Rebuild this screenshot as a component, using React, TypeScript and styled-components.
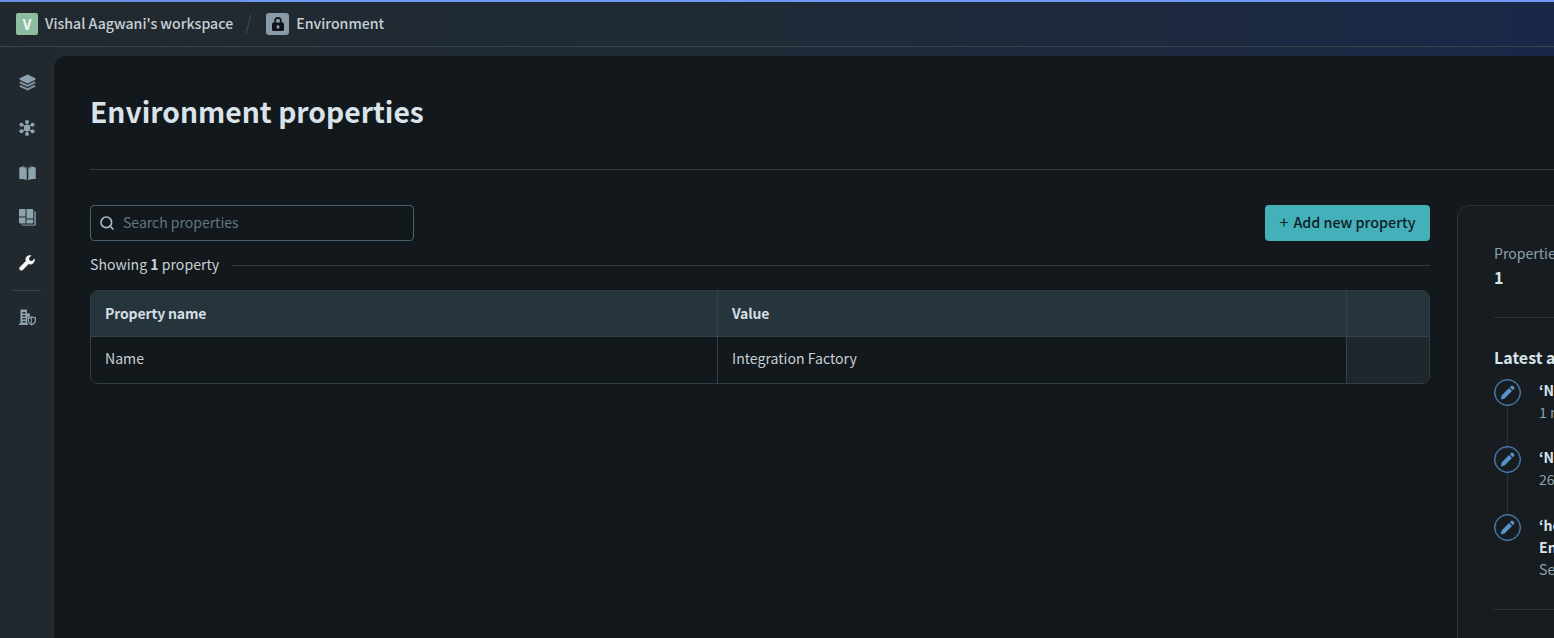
import React from 'react';
import styled, { createGlobalStyle } from 'styled-components';
import { Search } from 'lucide-react';

const FONT = '"Noto Sans CJK JP", "Noto Sans", sans-serif';

const GlobalStyle = createGlobalStyle`
    html, body {
        margin: 0;
        padding: 0;
        height: 100%;
        overflow: hidden;
        background: #1e2a3c;
    }
    #root { height: 100%; }
    * { box-sizing: border-box; }
`;

const activities = [
    { title: '‘Name’ property updated', lines: [], time: '1 minute ago', gap: 67 },
    { title: '‘Name’ property updated', lines: [], time: '26 minutes ago', gap: 68 },
    { title: '‘hello’ property added', lines: ['Environment'], time: 'Seen 1 hour ago', gap: 0 },
];

const LayersIcon = () => (
    <svg width="17" height="17" viewBox="0 0 17 17" fill="currentColor">
        <path d="M8.5 0.4 16.4 4.3 16.4 5.7 8.5 9.6 0.6 5.700 0.6 4.300Z" />
        <path d="M1.800 7.400 0.600 8 0.600 9.200 8.500 13.100 16.400 9.200 16.400 8 15.200 7.400 8.500 10.700Z" opacity="0.85" />
        <path d="M1.800 10.900 0.600 11.500 0.600 12.700 8.500 16.600 16.400 12.700 16.400 11.500 15.200 10.900 8.500 14.200Z" opacity="0.85" />
    </svg>
);

const ClusterIcon = () => (
    <svg width="16" height="16" viewBox="0 0 16 16" fill="currentColor">
        <circle cx="8" cy="8" r="3.200" />
        <circle cx="8" cy="2" r="2" />
        <circle cx="8" cy="14" r="2" />
        <circle cx="2.400" cy="4.800" r="2" />
        <circle cx="13.600" cy="4.800" r="2" />
        <circle cx="2.400" cy="11.200" r="2" />
        <circle cx="13.600" cy="11.200" r="2" />
        <path d="M7.500 2h1v12h-1zM2.400 4.400l.5-.8 10.700 8-.5.8zM13.100 3.600l.5.8-10.700 8-.5-.8z" />
    </svg>
);

const BookIcon = () => (
    <svg width="17" height="16" viewBox="0 0 17 16" fill="currentColor">
        <path d="M0.300 2.400 3.500 1.800 7.700 3.700V15.300C5.500 14.100 3 13.800 0.300 14.200Z" />
        <path d="M16.700 2.400 13.500 1.800 9.300 3.700V15.300C11.500 14.100 14 13.800 16.700 14.200Z" />
        <path d="M3.500 0.800 4.500 1 8.500 3 12.500 1 13.500 0.800 13.500 1.600 9 3.400H8L3.500 1.600Z" opacity="0.7" />
    </svg>
);

const DashboardIcon = () => (
    <svg width="17" height="17" viewBox="0 0 17 17" fill="currentColor">
        <path d="M0 1.200C0 .5.500 0 1.200 0H6.500V7.500H0ZM0 8.500H6.500V14.500H1.200C.5 14.500 0 14 0 13.300ZM7.500 0H13C13.700 0 14.300.5 14.300 1.200V9.500H7.500ZM7.500 10.500H14.300V13.300C14.300 14 13.700 14.500 13 14.500H7.500Z" />
        <path d="M15.200 2.200H15.800C16.500 2.200 17 2.700 17 3.400V15.500C17 16.200 16.500 16.700 15.800 16.700H3.400C2.700 16.700 2.200 16.200 2.200 15.500H15.200Z" opacity="0.75" />
    </svg>
);

const WrenchIcon = () => (
    <svg width="16" height="16" viewBox="0 0 16 16" fill="currentColor">
        <path d="M15.600 3.600 13 6.100 10.600 5.600 10 3.100 12.500.5C10.800-.1 8.900.3 7.700 1.600 6.500 2.800 6.200 4.600 6.800 6.100L.9 12C0 12.900 0 14.100.9 14.900 1.700 15.800 2.900 15.800 3.800 14.900L9.700 9.100C11.200 9.700 13.100 9.400 14.300 8.200 15.600 7 16.100 5.200 15.600 3.600Z" />
    </svg>
);

const OrgIcon = () => (
    <svg width="17" height="17" viewBox="0 0 17 17" fill="currentColor">
        <path d="M1.500 0.500H8V4.500H11V7A4.500 4.500 0 0 0 8 11.200C8 13 8.500 14.600 9.500 16H0V14.500H1.500ZM3.500 3V4.500H6.500V3ZM3.500 6V7.500H6.500V6ZM3.500 9V10.500H6.500V9ZM3.500 12V13.500H6.500V12Z" fillRule="evenodd" />
        <path d="M12.800 7.200 17 8.500V11.500C17 13.700 15.200 15.600 12.800 16.400 10.400 15.600 8.800 13.700 8.800 11.500V8.500ZM12.800 8.600V15C14.300 14.300 15.800 13 15.800 11.500V9.400ZM11.800 9.200 10 9.500V11.500C10 12.800 10.800 13.800 11.800 14.500Z" fillRule="evenodd" />
    </svg>
);

const LockIcon = () => (
    <svg width="12" height="14" viewBox="0 0 12 14" fill="currentColor">
        <path d="M6 0a3.700 3.700 0 0 0-3.700 3.700V5.500H1.500C.7 5.500 0 6.200 0 7v5.500C0 13.300.7 14 1.500 14h9c.8 0 1.500-.7 1.500-1.500V7c0-.8-.7-1.500-1.500-1.500H9.700V3.700A3.700 3.700 0 0 0 6 0Zm0 1.700c1.100 0 2 .9 2 2V5.500H4V3.700c0-1.100.9-2 2-2ZM6 8.200a1.500 1.500 0 0 1 .6 2.900v.9H5.400v-.9A1.500 1.500 0 0 1 6 8.200Z" fillRule="evenodd" />
    </svg>
);

const PencilIcon = () => (
    <svg width="15" height="15" viewBox="0 0 14 14" fill="currentColor">
        <path d="M10.300 .9a1.300 1.300 0 0 1 1.800 0l1 1a1.300 1.300 0 0 1 0 1.800L12 4.800 9.200 2ZM8.400 2.800l2.800 2.800-6.900 6.900-3.500 1.100L1.500 9.700Z" />
    </svg>
);

const App: React.FC = () => (
    <>
        <GlobalStyle />
        <Page>
            <ProgressBar />
            <TopBar>
                <Avatar>V</Avatar>
                <CrumbText>Vishal Aagwani's workspace</CrumbText>
                <Slash />
                <LockBadge><LockIcon /></LockBadge>
                <CrumbText>Environment</CrumbText>
            </TopBar>
            <Body>
                <SideRail>
                    <RailIcon><LayersIcon /></RailIcon>
                    <RailIcon><ClusterIcon /></RailIcon>
                    <RailIcon><BookIcon /></RailIcon>
                    <RailIcon><DashboardIcon /></RailIcon>
                    <RailIcon $active><WrenchIcon /></RailIcon>
                    <RailDivider />
                    <RailIcon><OrgIcon /></RailIcon>
                </SideRail>
                <Main>
                    <Title>Environment properties</Title>
                    <Rule />
                    <Columns>
                        <ListColumn>
                            <Toolbar>
                                <SearchBox>
                                    <Search size={16} color="#a9bcc7" strokeWidth={2.4} />
                                    <SearchInput placeholder="Search properties" />
                                </SearchBox>
                                <AddButton><PlusMark>+</PlusMark>Add new property</AddButton>
                            </Toolbar>
                            <CountRow>
                                <CountText>Showing <b>1</b> property</CountText>
                                <CountLine />
                            </CountRow>
                            <Table>
                                <HeadCell>Property name</HeadCell>
                                <HeadCell>Value</HeadCell>
                                <HeadCell $last />
                                <BodyCell>Name</BodyCell>
                                <BodyCell>Integration Factory</BodyCell>
                                <BodyCell $last $action />
                            </Table>
                        </ListColumn>
                        <SidePanel>
                            <StatLabel>Properties</StatLabel>
                            <StatValue>1</StatValue>
                            <PanelRule />
                            <PanelHeading>Latest activity</PanelHeading>
                            <Timeline>
                                {activities.map((a, i) => (
                                    <TimelineItem key={i} $height={a.gap}>
                                        <Marker $connected={i < activities.length - 1}>
                                            <PencilIcon />
                                        </Marker>
                                        <ItemBody>
                                            <ItemTitle>{a.title}</ItemTitle>
                                            {a.lines.map((l) => <ItemTitle key={l}>{l}</ItemTitle>)}
                                            <ItemTime>{a.time}</ItemTime>
                                        </ItemBody>
                                    </TimelineItem>
                                ))}
                            </Timeline>
                            <PanelRuleBottom />
                        </SidePanel>
                    </Columns>
                </Main>
            </Body>
        </Page>
    </>
);

const Page = styled.div`
    width: 1554px;
    height: 638px;
    overflow: hidden;
    display: flex;
    flex-direction: column;
    font-family: ${FONT};
    background: linear-gradient(90deg, #22292e 0%, #1f2b37 50%, #1a2848 100%);
`;

const ProgressBar = styled.div`
    height: 2px;
    flex: none;
    background: linear-gradient(90deg, #6c8fe6 0%, #6c8fe6 15%, #6f97f5 16%, #6f97f5 100%);
`;

const TopBar = styled.header`
    height: 45px;
    flex: none;
    display: flex;
    align-items: center;
    padding-left: 16px;
    border-bottom: 1px solid #3a464e;
`;

const Avatar = styled.div`
    width: 22px;
    height: 22px;
    border-radius: 2px;
    background: #8dbda1;
    color: #f4f7f5;
    font-size: 14px;
    font-weight: 700;
    display: flex;
    align-items: center;
    justify-content: center;
    margin-right: 7px;
`;

const CrumbText = styled.span`
    color: #c6d0d6;
    font-size: 14.15px;
    font-weight: 500;
    line-height: 20px;
    padding-bottom: 2px;
`;

const Slash = styled.div`
    width: 1px;
    height: 20px;
    background: #3f4b53;
    transform: rotate(14deg);
    margin: 0 17px 0 15px;
`;

const LockBadge = styled.div`
    width: 23px;
    height: 22px;
    border-radius: 3px;
    background: #8a9ba8;
    color: #0e1419;
    display: flex;
    align-items: center;
    justify-content: center;
    margin-right: 7px;
`;

const Body = styled.div`
    flex: 1;
    display: flex;
    min-height: 0;
    padding-top: 9px;
`;

const SideRail = styled.nav`
    width: 54px;
    flex: none;
    margin-top: -9px;
    padding-top: 13px;
    background: #22292e;
    display: flex;
    flex-direction: column;
    align-items: center;
`;

const RailIcon = styled.div<{ $active?: boolean }>`
    width: 54px;
    height: 45px;
    display: flex;
    align-items: center;
    justify-content: center;
    color: ${({ $active }) => ($active ? '#f2f5f7' : '#8ea3b0')};
`;

const RailDivider = styled.div`
    width: 28px;
    height: 1px;
    background: #39444b;
    margin: 5px 0 4px;
`;

const Main = styled.main`
    flex: 1;
    min-width: 0;
    background: #13181c;
    border-top-left-radius: 12px;
    padding: 0 0 0 36px;
`;

const Title = styled.h1`
    margin: 0;
    padding-top: 35px;
    height: 113px;
    color: #d9e3ea;
    font-size: 28.25px;
    line-height: 40px;
    font-weight: 700;
`;

const Rule = styled.div`
    height: 1px;
    background: #2f3a41;
`;

const Columns = styled.div`
    display: flex;
    gap: 27px;
    padding-top: 35px;
`;

const ListColumn = styled.section`
    width: 1340px;
    flex: none;
`;

const Toolbar = styled.div`
    display: flex;
    align-items: center;
    justify-content: space-between;
    height: 36px;
`;

const SearchBox = styled.label`
    width: 324px;
    height: 36px;
    border: 1px solid #4a6270;
    border-radius: 4px;
    display: flex;
    align-items: center;
    gap: 8px;
    padding-left: 8px;
`;

const SearchInput = styled.input`
    flex: 1;
    min-width: 0;
    border: none;
    outline: none;
    background: transparent;
    font-family: inherit;
    font-size: 14px;
    padding: 0 0 3px;
    color: #d9e3ea;
    &::placeholder {
        color: #62757f;
        opacity: 1;
    }
`;

const AddButton = styled.button`
    width: 165px;
    height: 36px;
    border: none;
    border-radius: 4px;
    background: #43b0ba;
    color: #0f1c24;
    font-family: inherit;
    font-size: 14.3px;
    font-weight: 500;
    padding: 0 0 3px;
`;

const PlusMark = styled.span`
    font-size: 16px;
    font-weight: 400;
    line-height: 1;
    margin-right: 5px;
`;

const CountRow = styled.div`
    display: flex;
    align-items: center;
    gap: 13px;
    height: 20px;
    margin-top: 14px;
`;

const CountText = styled.span`
    color: #c6d0d6;
    font-size: 14.1px;
    line-height: 20px;
    padding-bottom: 3px;
    b { font-weight: 700; }
`;

const CountLine = styled.div`
    flex: 1;
    height: 1px;
    background: #2f3a41;
`;

const Table = styled.div`
    margin-top: 15px;
    display: grid;
    grid-template-columns: 627px 629px 1fr;
    grid-template-rows: 46px 46px;
    border: 1px solid #2f3d45;
    border-radius: 8px;
    overflow: hidden;
`;

const HeadCell = styled.div<{ $last?: boolean }>`
    background: #26343b;
    color: #d4dee5;
    font-size: 14px;
    font-weight: 700;
    letter-spacing: -0.15px;
    display: flex;
    align-items: center;
    padding: 0 0 2px 14px;
    border-bottom: 1px solid #33424a;
    border-right: ${({ $last }) => ($last ? 'none' : '1px solid #33424a')};
`;

const BodyCell = styled.div<{ $last?: boolean; $action?: boolean }>`
    background: ${({ $action }) => ($action ? '#1f272d' : '#13181c')};
    color: #c6d0d6;
    font-size: 14.1px;
    display: flex;
    align-items: center;
    padding: 0 0 4px 14px;
    border-right: ${({ $last }) => ($last ? 'none' : '1px solid #33424a')};
`;

const SidePanel = styled.aside`
    width: 400px;
    flex: none;
    height: 480px;
    background: #161c20;
    border: 1px solid #29323a;
    border-radius: 12px;
    padding: 37px 36px;
`;

const StatLabel = styled.div`
    color: #8fa1ac;
    font-size: 14.1px;
    line-height: 20px;
    white-space: nowrap;
`;

const StatValue = styled.div`
    color: #d9e3ea;
    font-size: 16px;
    font-weight: 700;
    line-height: 20px;
    margin-top: 4px;
`;

const PanelRule = styled.div`
    height: 1px;
    background: #2a3339;
    margin-top: 30px;
`;

const PanelRuleBottom = styled(PanelRule)`
    margin-top: 0;
`;

const PanelHeading = styled.h2`
    margin: 29px 0 0;
    color: #d9e3ea;
    font-size: 16px;
    font-weight: 700;
    line-height: 20px;
    padding-bottom: 2px;
`;

const Timeline = styled.div`
    margin-top: 10px;
    height: 230px;
`;

const TimelineItem = styled.div<{ $height: number }>`
    display: flex;
    gap: 18px;
    height: ${({ $height }) => ($height ? `${$height}px` : 'auto')};
`;

const Marker = styled.div<{ $connected: boolean }>`
    position: relative;
    width: 27px;
    height: 27px;
    flex: none;
    border: 1px solid #5590cc;
    box-shadow: inset 0 0 0 1px rgba(85, 144, 204, 0.35);
    border-radius: 50%;
    color: #5a93cc;
    display: flex;
    align-items: center;
    justify-content: center;
    &::after {
        content: '';
        display: ${({ $connected }) => ($connected ? 'block' : 'none')};
        position: absolute;
        left: 12px;
        top: 26px;
        width: 1px;
        height: 40px;
        background: #2a3339;
    }
`;

const ItemBody = styled.div`
    white-space: nowrap;
`;

const ItemTitle = styled.div`
    color: #d9e3ea;
    font-size: 14.1px;
    font-weight: 700;
    line-height: 22px;
`;

const ItemTime = styled.div`
    color: #8fa1ac;
    font-size: 14.1px;
    line-height: 22px;
`;

export default App;
